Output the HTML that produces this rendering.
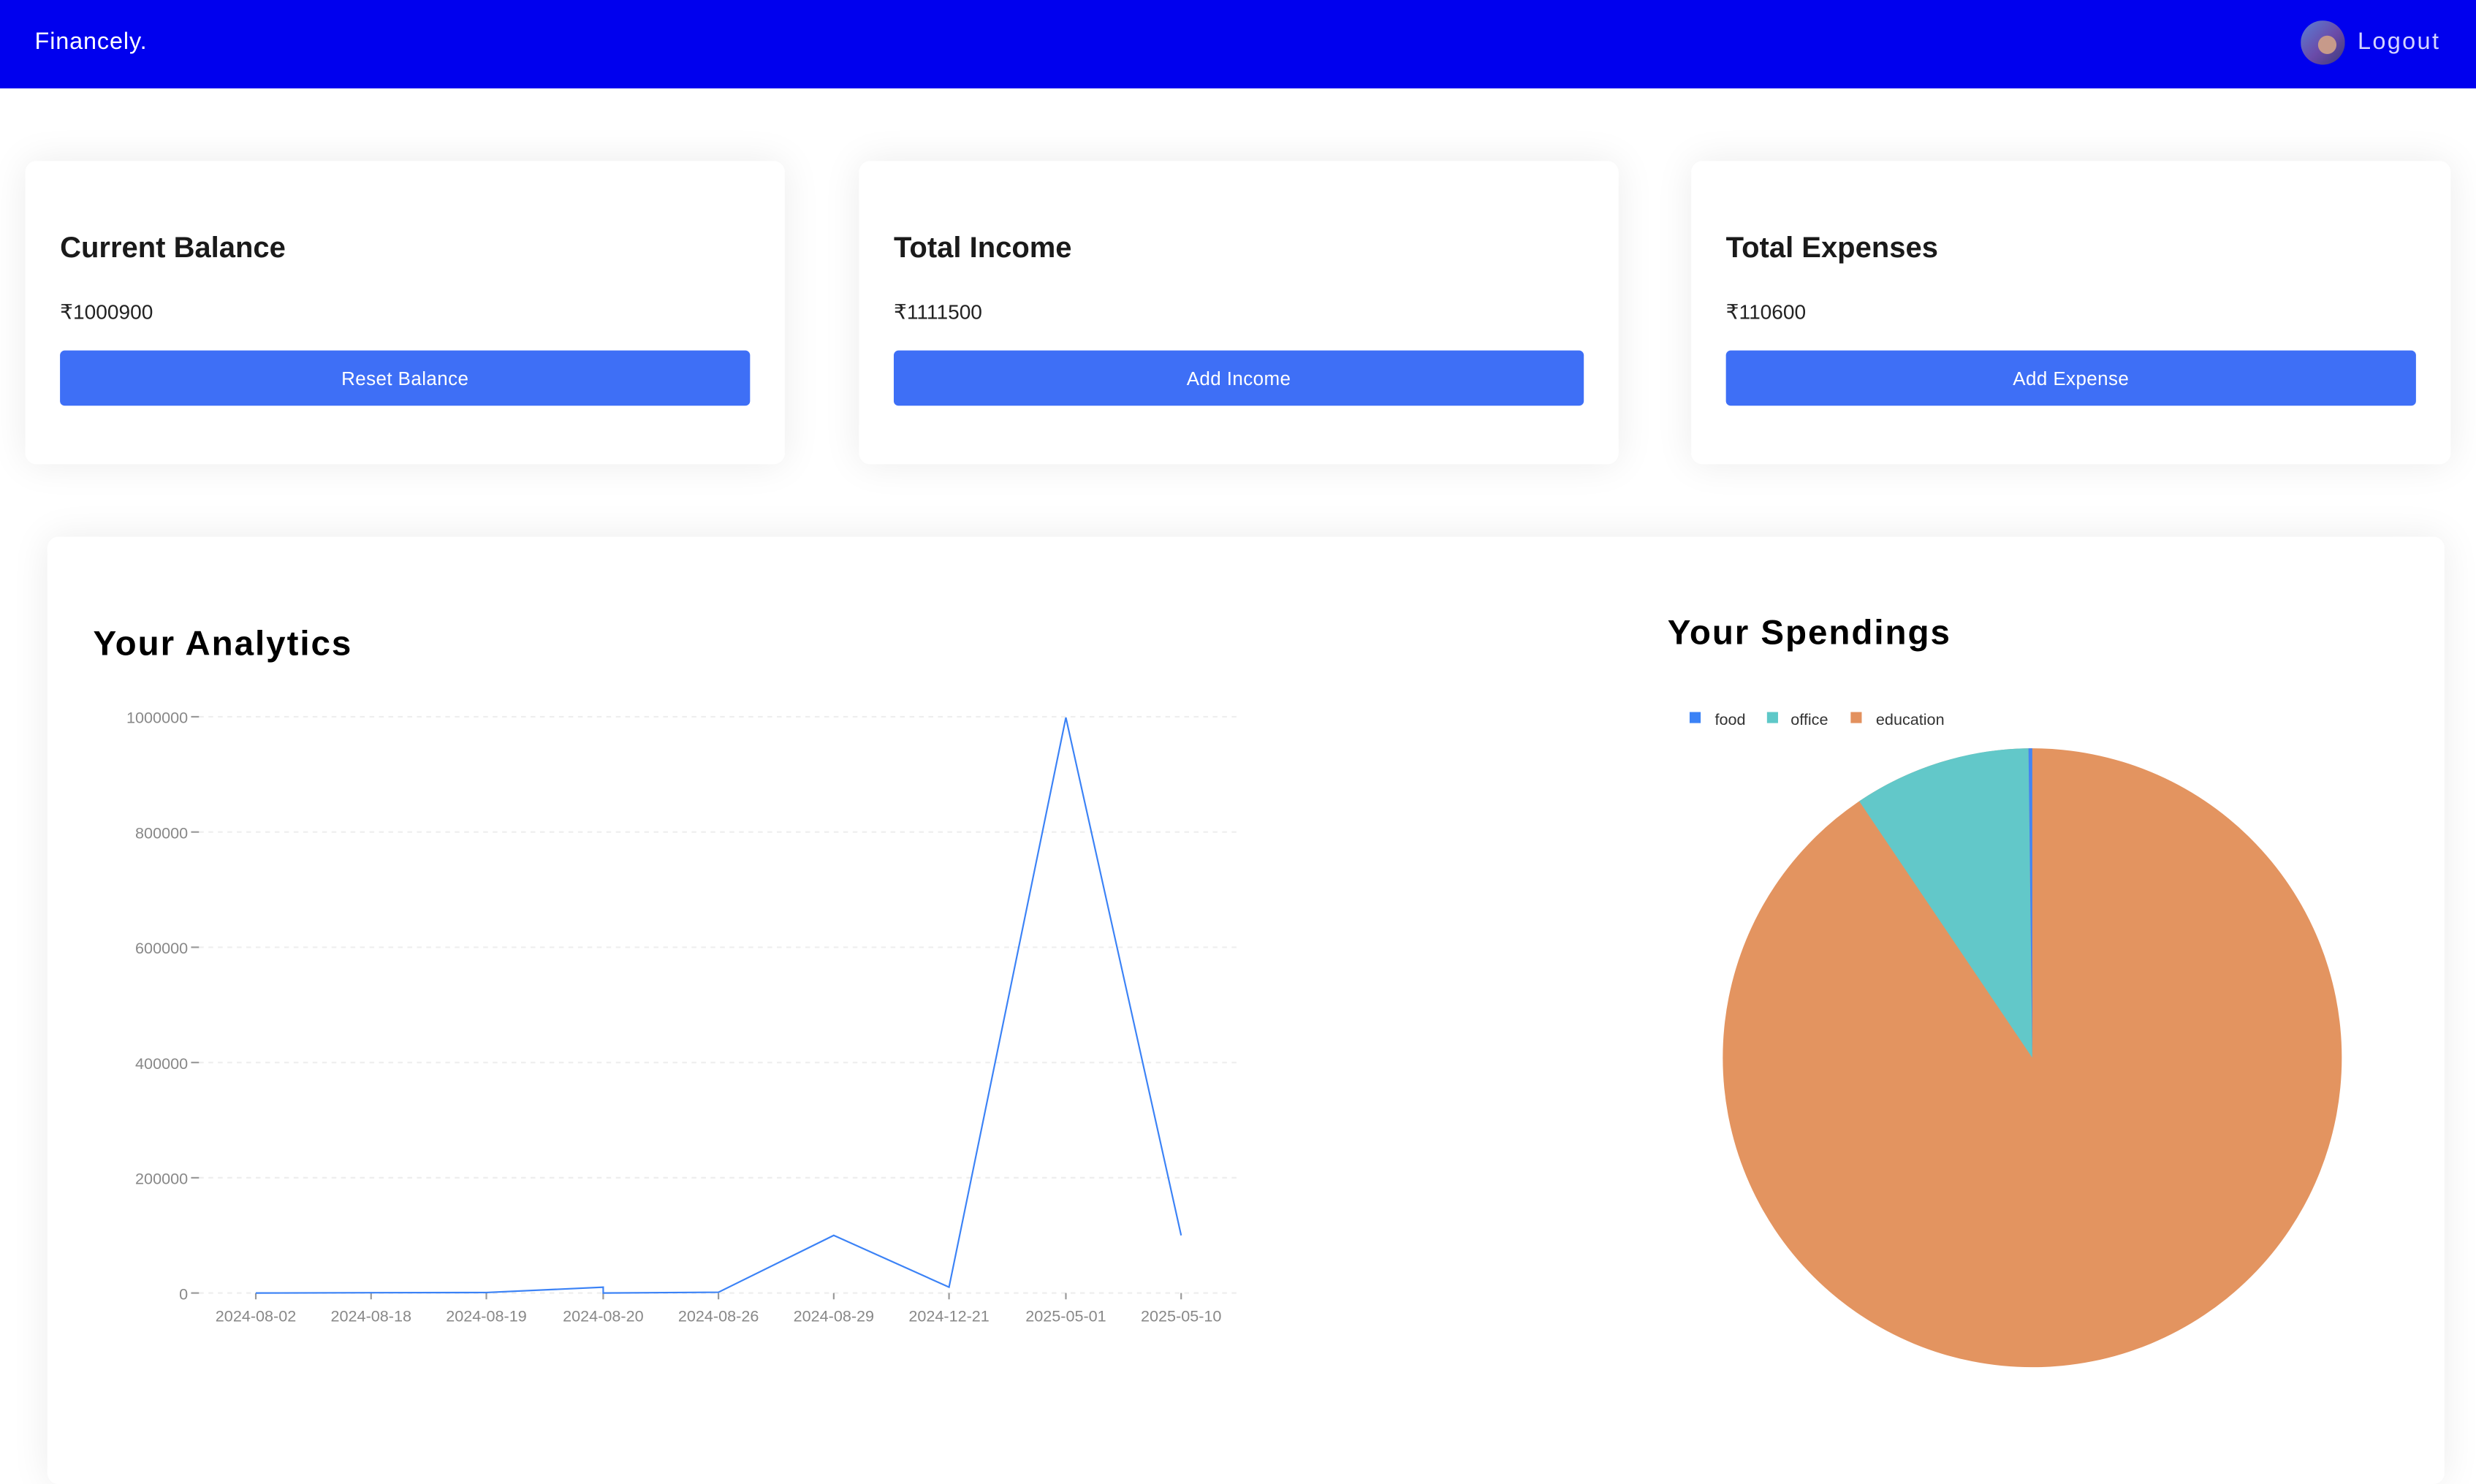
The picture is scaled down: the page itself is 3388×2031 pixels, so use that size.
<!DOCTYPE html>
<html><head><meta charset="utf-8"><style>
html,body{margin:0;padding:0;width:3388px;height:1956px;overflow:hidden;background:#fff}
#w{position:absolute;left:0;top:0;width:1568px;height:905px;transform:scale(2.16071);transform-origin:0 0;font-family:"Liberation Sans",sans-serif}
.hdr{position:absolute;left:0;top:0;width:1568px;height:56px;background:#0000ee}
.brand{position:absolute;left:22px;top:18px;color:#fff;font-size:15px;letter-spacing:.4px}
.logout{position:absolute;left:1493px;top:18px;color:#d4d4ff;font-size:15px;letter-spacing:1.1px}
.av{position:absolute;left:1457px;top:13px;width:28px;height:28px;border-radius:50%;background:radial-gradient(circle at 60% 55%,#c79a8a 0 25%,transparent 26%),linear-gradient(135deg,#5a7fd6,#6a4aa8 55%,#3b3b7a)}
.card{position:absolute;top:102px;width:481px;height:192px;background:#fff;border-radius:7px;box-shadow:0 0 24px rgba(0,0,0,.08)}
.card h3{position:absolute;left:22px;top:44px;margin:0;font-size:18.5px;font-weight:bold;color:#1a1a1a;letter-spacing:0}
.card .amt{position:absolute;left:22px;top:88px;font-size:13px;color:#222}
.card .btn{position:absolute;left:22px;top:120px;width:437px;height:35px;background:#3e6ff6;border-radius:3px;color:#fff;font-size:12px;line-height:36px;text-align:center;letter-spacing:.2px}
.big{position:absolute;left:30px;top:340px;width:1518px;height:600px;background:#fff;border-radius:7px;box-shadow:0 0 24px rgba(0,0,0,.08)}
.t{position:absolute;font-size:22px;font-weight:bold;color:#000;letter-spacing:.9px}
svg{position:absolute;left:0;top:0}
</style></head><body><div id="w">
<div class="hdr"><div class="brand">Financely.</div><div class="av"></div><div class="logout">Logout</div></div>
<div class="card" style="left:16px"><h3>Current Balance</h3><div class="amt">₹1000900</div><div class="btn">Reset Balance</div></div>
<div class="card" style="left:544px"><h3>Total Income</h3><div class="amt">₹1111500</div><div class="btn">Add Income</div></div>
<div class="card" style="left:1071px"><h3>Total Expenses</h3><div class="amt">₹110600</div><div class="btn">Add Expense</div></div>
<div class="big"></div>
<div class="t" style="left:59px;top:395px">Your Analytics</div>
<div class="t" style="left:1056px;top:388px">Your Spendings</div>
<svg width="1568" height="905" viewBox="0 0 1568 905" font-family="Liberation Sans,sans-serif">
<g stroke="#eee" stroke-dasharray="3 3">
<line x1="126" y1="454" x2="783" y2="454"/><line x1="126" y1="527" x2="783" y2="527"/><line x1="126" y1="600" x2="783" y2="600"/><line x1="126" y1="673" x2="783" y2="673"/><line x1="126" y1="746" x2="783" y2="746"/><line x1="126" y1="819" x2="783" y2="819"/>
</g>
<g stroke="#999"><line x1="121" y1="454" x2="126" y2="454"/><line x1="121" y1="527" x2="126" y2="527"/><line x1="121" y1="600" x2="126" y2="600"/><line x1="121" y1="673" x2="126" y2="673"/><line x1="121" y1="746" x2="126" y2="746"/><line x1="121" y1="819" x2="126" y2="819"/>
<line x1="162" y1="819" x2="162" y2="823"/><line x1="235" y1="819" x2="235" y2="823"/><line x1="308" y1="819" x2="308" y2="823"/><line x1="382" y1="819" x2="382" y2="823"/><line x1="455" y1="819" x2="455" y2="823"/><line x1="528" y1="819" x2="528" y2="823"/><line x1="601" y1="819" x2="601" y2="823"/><line x1="675" y1="819" x2="675" y2="823"/><line x1="748" y1="819" x2="748" y2="823"/></g>
<g fill="#888" font-size="10" text-anchor="end"><text x="119" y="458">1000000</text><text x="119" y="531">800000</text><text x="119" y="604">600000</text><text x="119" y="677">400000</text><text x="119" y="750">200000</text><text x="119" y="823">0</text></g>
<g fill="#888" font-size="10" text-anchor="middle"><text x="162" y="837">2024-08-02</text><text x="235" y="837">2024-08-18</text><text x="308" y="837">2024-08-19</text><text x="382" y="837">2024-08-20</text><text x="455" y="837">2024-08-26</text><text x="528" y="837">2024-08-29</text><text x="601" y="837">2024-12-21</text><text x="675" y="837">2025-05-01</text><text x="748" y="837">2025-05-10</text></g>
<polyline fill="none" stroke="#3b82f6" stroke-width="1" points="162,819 235,818.8 308,818.7 382,815.3 382,819 455,818.5 528,782.5 601,815.3 675,454.5 748,782.5"/>
<rect x="1070" y="451" width="7" height="7" fill="#3b82f6"/><text x="1086" y="459" font-size="10" fill="#333">food</text>
<rect x="1119" y="451" width="7" height="7" fill="#5ec8c8"/><text x="1134" y="459" font-size="10" fill="#333">office</text>
<rect x="1172" y="451" width="7" height="7" fill="#e3915e"/><text x="1188" y="459" font-size="10" fill="#333">education</text>
<circle cx="1287" cy="670" r="196" fill="#e39460"/>
<path d="M1287 670 L1177.4 507.5 A196 196 0 0 1 1284.6 474 Z" fill="#62c8c9"/>
<path d="M1287 670 L1284.6 474 A196 196 0 0 1 1287 474 Z" fill="#4285f4"/>
</svg>
</div></body></html>
